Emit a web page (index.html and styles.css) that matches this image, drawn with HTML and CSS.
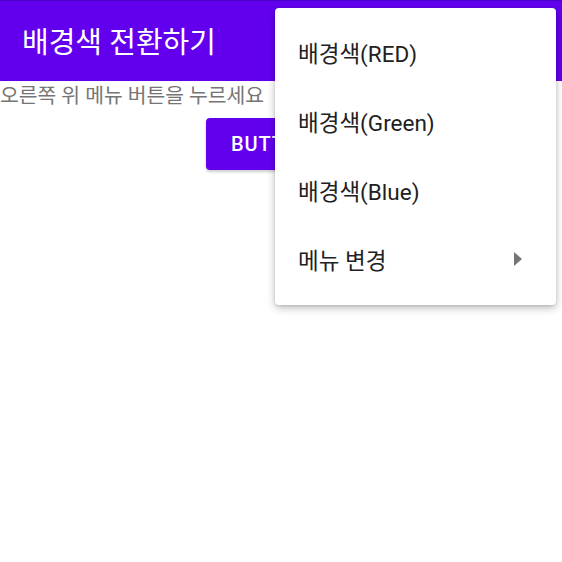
FILE: index.html
```html
<!DOCTYPE html>
<html lang="ko">
<head>
    <meta charset="UTF-8">
    <meta name="viewport" content="width=device-width, initial-scale=1.0">
    <title>배경색 전환하기</title>
    <link rel="stylesheet" href="styles.css">
</head>
<body>
    <header class="app-bar">
        <h1 class="title">배경색 전환하기</h1>
    </header>

    <main class="content">
        <p class="hint">오른쪽 위 메뉴 버튼을 누르세요</p>
        <div class="actions">
            <button class="btn">BUTTON</button>
        </div>
    </main>

    <ul class="popup-menu">
        <li>배경색(RED)</li>
        <li>배경색(Green)</li>
        <li>배경색(Blue)</li>
        <li class="has-sub">메뉴 변경<span class="arrow"></span></li>
    </ul>
</body>
</html>
```

FILE: styles.css
```css
body {
    font-family: Roboto, 'Noto Sans CJK KR', sans-serif;
    margin: 0;
    padding: 0;
    background-color: #fff;
    width: 562px;
    height: 562px;
    overflow: hidden;
}
.app-bar {
    background-color: #6200ee;
    border-top: 1px solid #4a00c8;
    height: 80px;
    display: flex;
    align-items: center;
    padding: 0 22px;
}
.title {
    margin: 0;
    font-size: 29px;
    font-weight: 400;
    color: #fff;
    padding-bottom: 2px;
}
.hint {
    margin: 2px 0 0;
    font-size: 20.4px;
    line-height: 26px;
    color: #757575;
}
.actions {
    display: flex;
    justify-content: center;
    margin-top: 9px;
}
.btn {
    background-color: #6200ee;
    color: #fff;
    border: none;
    border-radius: 4px;
    width: 150px;
    height: 52px;
    padding: 0 0 0 25px;
    text-align: left;
    font-family: Roboto, sans-serif;
    font-size: 20px;
    font-weight: 500;
    letter-spacing: 0.9px;
    box-shadow: 0 2px 3px rgba(0,0,0,0.2);
}
.popup-menu {
    position: absolute;
    top: 8px;
    left: 275px;
    width: 281px;
    margin: 0;
    padding: 9px 0 12px;
    list-style: none;
    background-color: #fff;
    border-radius: 4px;
    box-shadow: 0 3px 8px rgba(0,0,0,0.25), 0 1px 3px rgba(0,0,0,0.12);
}
.popup-menu li {
    height: 69px;
    display: flex;
    align-items: center;
    justify-content: space-between;
    padding: 0 34px 0 23px;
    font-size: 22.5px;
    color: #212121;
}
.arrow {
    width: 0;
    height: 0;
    border-top: 7px solid transparent;
    border-bottom: 7px solid transparent;
    border-left: 8px solid #757575;
}
```
